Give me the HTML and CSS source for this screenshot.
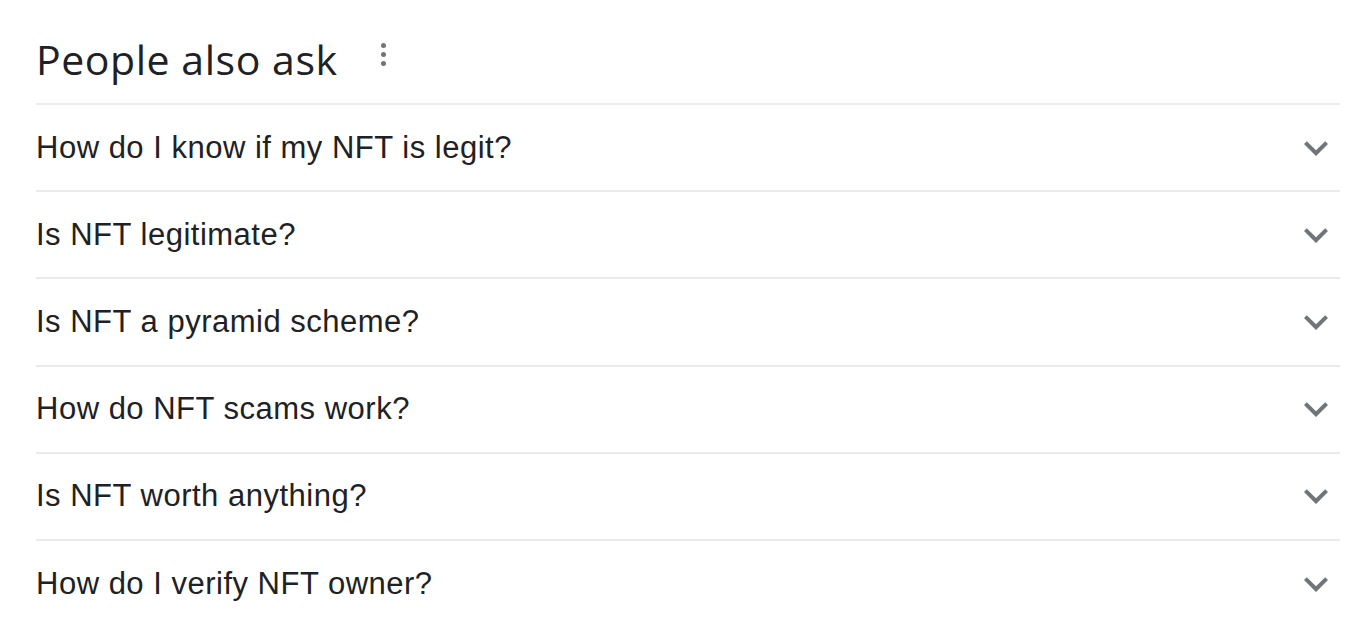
FILE: index.html
```html
<!DOCTYPE html>
<html lang="en">
<head>
<meta charset="utf-8">
<title>People also ask</title>
<link rel="stylesheet" href="styles.css">
</head>
<body>
<div class="paa">
  <div class="paa-header">
    <h2 class="paa-title">People also ask</h2>
    <button class="kebab" aria-label="More options">
      <span class="dot"></span><span class="dot"></span><span class="dot"></span>
    </button>
  </div>
  <div class="paa-list">
    <div class="paa-row"><span class="q">How do I know if my NFT is legit?</span><svg class="chev" viewBox="0 0 24 24"><path d="M16.59 8.59L12 13.17 7.41 8.59 6 10l6 6 6-6z"/></svg></div>
    <div class="paa-row"><span class="q">Is NFT legitimate?</span><svg class="chev" viewBox="0 0 24 24"><path d="M16.59 8.59L12 13.17 7.41 8.59 6 10l6 6 6-6z"/></svg></div>
    <div class="paa-row"><span class="q">Is NFT a pyramid scheme?</span><svg class="chev" viewBox="0 0 24 24"><path d="M16.59 8.59L12 13.17 7.41 8.59 6 10l6 6 6-6z"/></svg></div>
    <div class="paa-row"><span class="q">How do NFT scams work?</span><svg class="chev" viewBox="0 0 24 24"><path d="M16.59 8.59L12 13.17 7.41 8.59 6 10l6 6 6-6z"/></svg></div>
    <div class="paa-row"><span class="q">Is NFT worth anything?</span><svg class="chev" viewBox="0 0 24 24"><path d="M16.59 8.59L12 13.17 7.41 8.59 6 10l6 6 6-6z"/></svg></div>
    <div class="paa-row"><span class="q">How do I verify NFT owner?</span><svg class="chev" viewBox="0 0 24 24"><path d="M16.59 8.59L12 13.17 7.41 8.59 6 10l6 6 6-6z"/></svg></div>
  </div>
</div>
</body>
</html>
```
FILE: styles.css
```css
html, body {
  margin: 0;
  padding: 0;
  background: #ffffff;
}
body {
  font-family: "Liberation Sans", Arial, sans-serif;
  color: #202124;
}
.paa {
  margin-left: 36px;
  width: 1304px;
}
.paa-header {
  display: flex;
  align-items: center;
  height: 103px;
  gap: 43px;
}
.paa-title {
  margin: 0;
  font-family: "Open Sans", Roboto, sans-serif;
  font-weight: 400;
  font-size: 41px;
  letter-spacing: 0.55px;
  line-height: 42px;
  color: #202124;
  padding-top: 14px;
}
.kebab {
  display: flex;
  flex-direction: column;
  gap: 4px;
  padding: 0;
  margin-top: 6px;
  border: 0;
  background: transparent;
}
.dot {
  width: 5px;
  height: 5px;
  border-radius: 50%;
  background: #70757a;
}
.paa-row {
  display: flex;
  align-items: center;
  justify-content: space-between;
  height: 85.2px;
  border-top: 2px solid #ebebeb;
}
.q {
  font-size: 31px;
  letter-spacing: 0.5px;
  line-height: 34px;
  color: #202124;
}
.chev {
  width: 48px;
  height: 48px;
  fill: #70757a;
}
```
